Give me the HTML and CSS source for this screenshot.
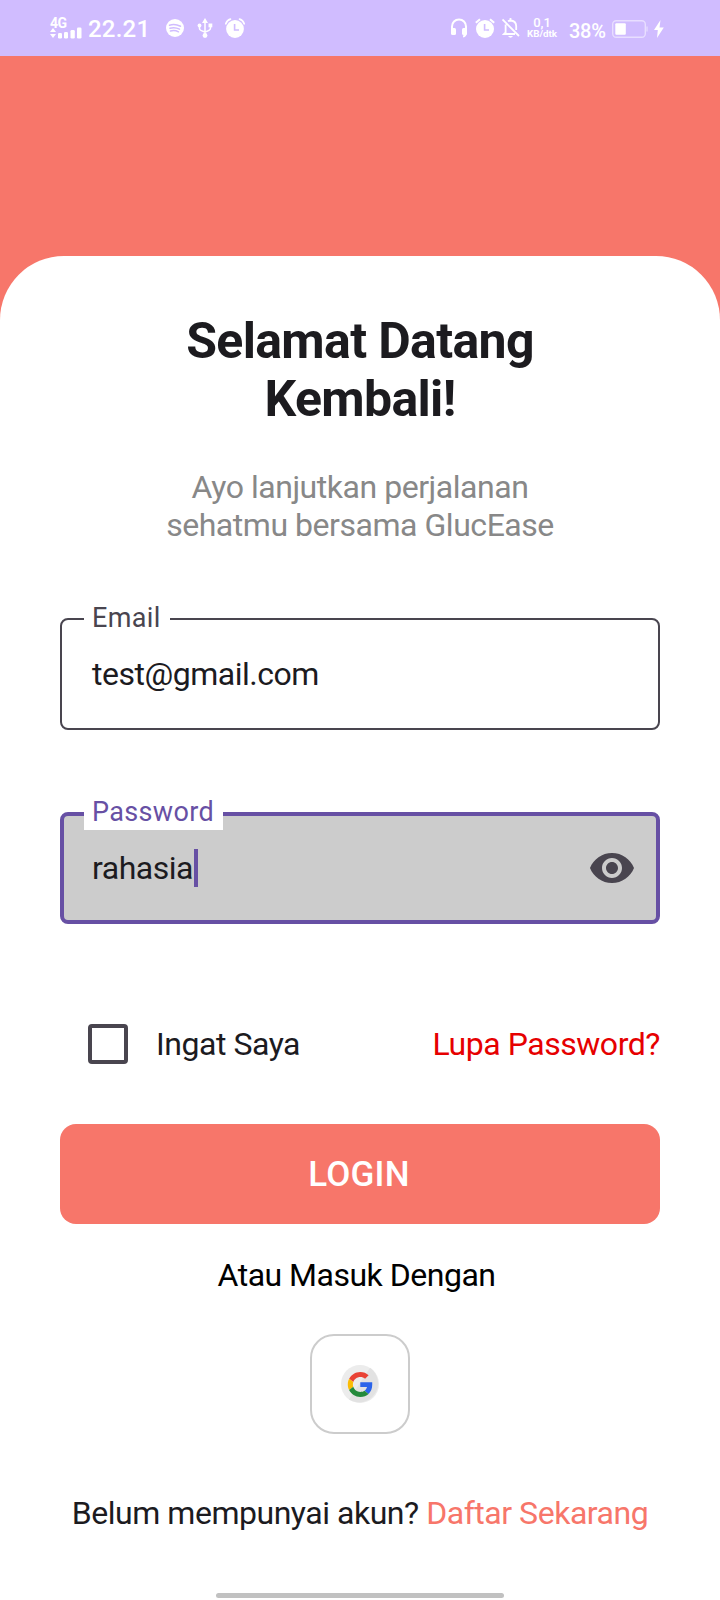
FILE: index.html
```html
<!DOCTYPE html>
<html lang="id">
<head>
<meta charset="utf-8">
<title>GlucEase</title>
<link rel="stylesheet" href="styles.css">
</head>
<body>
<div class="screen">
  <header class="status">
    <div class="network">
      <span class="network-type">4G</span>
      <svg class="signal" width="32" height="12" viewBox="0 0 32 12" fill="#fff"><path d="M0 5l3-4 3 4zM0 7h6l-3 4z"/><rect x="8" y="6" width="4" height="5.500" rx="1.3"/><rect x="14" y="5" width="4" height="6.500" rx="1.3"/><rect x="20.5" y="3" width="4.300" height="8.500" rx="1.3"/><rect x="27" y=".5" width="4.500" height="11" rx="1.3"/></svg>
    </div>
    <span class="clock">22.21</span>
    <svg class="spotify" width="18" height="18" viewBox="0 0 18 18"><circle cx="9" cy="9" r="9" fill="#fff"/><path d="M3.5 6.2q5.5-1.6 11 1M4 9.2q5-1.4 9.500 1M4.500 12q4.200-1.100 8 .8" fill="none" stroke="#d0bcff" stroke-width="1.500" stroke-linecap="round"/></svg>
    <svg class="usb" width="16" height="20" viewBox="0 0 16 20"><path d="M8 4v13M2.500 8v2.500q0 2 5.500 3.500M13.500 8v2q0 2.500-5.500 4" fill="none" stroke="#fff" stroke-width="1.500"/><path d="M8 0l3 5H5z" fill="#fff"/><circle cx="8" cy="17.500" r="2.400" fill="#fff"/><circle cx="2.500" cy="7.500" r="1.900" fill="#fff"/><path d="M11.500 5.500h3.800v3.800h-3.800z" fill="#fff"/></svg>
    <svg class="alarm-left" width="20" height="20" viewBox="0 0 20 20"><circle cx="10" cy="11" r="8.900" fill="#fff"/><path d="M.8 5.800Q1.800 2.200 5.400 1.100M19.200 5.800Q18.200 2.200 14.600 1.100" stroke="#fff" stroke-width="1.700" fill="none" stroke-linecap="round"/><path d="M9.600 6v6h4.400" stroke="#d0bcff" stroke-width="1.600" fill="none"/></svg>
    <svg class="headset" width="18" height="20" viewBox="0 0 18 20"><path d="M2 13V8.500C2 4.500 5 1.500 9 1.500s7 3 7 7V14q0 4-3 4.500" fill="none" stroke="#fff" stroke-width="2"/><rect x="1" y="10" width="5" height="7" rx="1.500" fill="#fff"/><rect x="12" y="10" width="5" height="7" rx="1.500" fill="#fff"/></svg>
    <svg class="alarm-right" width="20" height="20" viewBox="0 0 20 20"><circle cx="10" cy="11" r="9" fill="#fff"/><path d="M.8 4.800L5 1.200M19.200 4.800L15 1.200" stroke="#fff" stroke-width="2" fill="none"/><path d="M9.600 6v6h4.400" stroke="#d0bcff" stroke-width="1.600" fill="none"/></svg>
    <svg class="bell" width="18" height="20" viewBox="0 0 18 20" fill="none" stroke="#fff" stroke-width="1.800"><path d="M.5 1.500l16.500 16.500M3.600 6.500V14.500L2 16h11M6 3.200Q7 2.600 8.500 2.500q5.500.3 5.700 5.500v4"/><path d="M6 18h5q-2.500 3.500-5 0z" fill="#fff" stroke="none"/><path d="M8.500 0v3"/></svg>
    <div class="speed"><span class="rate">0,1</span><span class="unit">KB/dtk</span></div>
    <span class="percent">38%</span>
    <svg class="battery" width="36" height="18" viewBox="0 0 36 18"><rect x=".7" y=".7" width="32.600" height="16.600" rx="3.500" fill="none" stroke="#fff" stroke-opacity=".5" stroke-width="1.400"/><rect x="3.300" y="3.300" width="10.500" height="11.400" rx="1" fill="#fff"/><path d="M35 6.500v5" stroke="#fff" stroke-opacity=".5" stroke-width="1.200"/></svg>
    <svg class="bolt" width="10" height="18" viewBox="0 0 10 18"><path d="M6.500 0L0 10h3.800L3 18l6.800-10.500H5.500z" fill="#fff"/></svg>
  </header>

  <main class="card">
    <h1 class="title">Selamat Datang<br>Kembali!</h1>
    <p class="subtitle">Ayo lanjutkan perjalanan<br>sehatmu bersama GlucEase</p>

    <div class="field field-email">
      <span class="field-label">Email</span>
      <span class="field-value">test@gmail.com</span>
    </div>

    <div class="field field-password">
      <span class="field-label">Password</span>
      <span class="field-value">rahasia</span><span class="caret"></span>
      <svg class="eye" width="48" height="48" viewBox="0 0 24 24" fill="#49454f"><path d="M12 4.500C7 4.500 2.730 7.610 1 12c1.730 4.390 6 7.500 11 7.500s9.270-3.110 11-7.500c-1.730-4.390-6-7.500-11-7.500zM12 17c-2.760 0-5-2.240-5-5s2.240-5 5-5 5 2.240 5 5-2.240 5-5 5zm0-8c-1.660 0-3 1.340-3 3s1.340 3 3 3 3-1.340 3-3-1.340-3-3-3z"/></svg>
    </div>

    <div class="options">
      <span class="checkbox"></span>
      <span class="remember">Ingat Saya</span>
      <a class="forgot">Lupa Password?</a>
    </div>

    <div class="login">LOGIN</div>
    <p class="divider">Atau Masuk Dengan</p>

    <div class="google">
      <svg width="38" height="38" viewBox="0 0 38 38"><circle cx="19" cy="19" r="19" fill="#ececec"/><path d="M29 2.850A19 19 0 0 1 8 34.500z" fill="#e2e2e2"/>
      <g transform="translate(6.800 7) scale(.52)"><path fill="#e94235" d="M24 9.500c3.540 0 6.710 1.220 9.210 3.600l6.850-6.850C35.900 2.380 30.470 0 24 0 14.620 0 6.510 5.380 2.560 13.220l7.980 6.190C12.430 13.720 17.740 9.500 24 9.500z"/><path fill="#2b64ea" d="M46.980 19.800H24v9.200h12.940c-.58 2.960-2.260 5.480-4.780 7.180l7.730 6c4.510-4.180 7.090-10.360 7.090-17.650z"/><path fill="#fbbc05" d="M10.530 28.590c-.48-1.450-.76-2.990-.76-4.590s.27-3.140.76-4.590l-7.980-6.190C.92 16.460 0 20.120 0 24c0 3.880.92 7.540 2.560 10.780z"/><path fill="#248a3b" d="M24 48c6.480 0 11.930-2.130 15.890-5.810l-7.730-6c-2.150 1.450-4.920 2.300-8.160 2.300-6.260 0-11.570-4.220-13.470-9.910l-7.980 6.190C6.510 42.620 14.620 48 24 48z"/></g></svg>
    </div>

    <p class="signup">Belum mempunyai akun? <a class="signup-link">Daftar Sekarang</a></p>
    <div class="home-bar"></div>
  </main>
</div>
</body>
</html>
```
FILE: styles.css
```css
* { box-sizing: border-box; }
body { margin: 0; font-family: Roboto, "Liberation Sans", sans-serif; color: #1c1b1f; }
h1, p { margin: 0; }
svg { display: block; flex: none; }

.screen { width: 720px; height: 1600px; background: #f7766a; overflow: hidden; }

.status {
  height: 56px;
  padding: 18px 0 0 50px;
  display: flex;
  align-items: flex-start;
  background: #d0bcff;
  color: #fff;
  white-space: nowrap;
}
.network { width: 32px; height: 20px; display: flex; flex-direction: column; flex: none; }
.network-type { font-size: 14px; line-height: 10px; font-weight: 700; height: 9px; letter-spacing: -.6px; }
.clock { width: 64px; margin-left: 6px; font-size: 24px; line-height: 22px; font-weight: 500; letter-spacing: .2px; }
.spotify { margin: 1px 0 0 14px; }
.usb { margin-left: 13px; }
.alarm-left { margin-left: 12px; }
.headset { margin-left: 205px; }
.alarm-right { margin-left: 7px; }
.bell { margin-left: 7px; }
.speed { width: 32px; margin: 0 0 0 6px; display: flex; flex-direction: column; align-items: center; font-weight: 700; }
.rate { font-size: 13px; line-height: 10px; font-weight: 500; }
.unit { font-size: 9.800px; line-height: 11px; }
.percent { width: 43px; margin: 2px 0 0 11px; font-size: 20px; line-height: 23px; font-weight: 500; letter-spacing: -.3px; }
.battery { margin: 2px 0 0; }
.bolt { margin: 2px 0 0 6px; }

.card {
  height: 1344px;
  margin-top: 200px;
  padding: 56px 60px 0;
  background: #fff;
  border-radius: 64px 64px 0 0;
  display: flex;
  flex-direction: column;
}
.title { font-size: 50px; line-height: 58px; font-weight: 700; text-align: center; letter-spacing: -.650px; }
.subtitle { margin-top: 40px; font-size: 32px; line-height: 38px; text-align: center; color: #888; letter-spacing: -.460px; }

.field {
  position: relative;
  height: 112px;
  display: flex;
  align-items: center;
  border: 2px solid #49454f;
  border-radius: 8px;
  font-size: 32px;
  line-height: 38px;
  letter-spacing: -.480px;
}
.field-email { margin-top: 74px; padding-left: 30px; }
.field-password { margin-top: 82px; padding: 0 20px 0 28px; border: 4px solid #6750a4; background: #ccc; }
.field-label {
  position: absolute;
  left: 22px;
  top: -19px;
  height: 35px;
  padding: 0 9px 0 8px;
  background: #fff;
  color: #49454f;
  font-size: 27px;
  line-height: 34px;
  letter-spacing: .350px;
}
.field-password .field-label { left: 20px; top: -21px; color: #6750a4; }
.caret { width: 4px; height: 38px; margin-left: 1px; background: #6750a4; }
.eye { margin-left: auto; }

.options { height: 40px; margin-top: 100px; padding-left: 28px; display: flex; align-items: center; font-size: 32px; line-height: 38px; letter-spacing: -.460px; }
.checkbox { width: 40px; height: 40px; border: 4px solid #49454f; border-radius: 4px; }
.remember { margin-left: 28px; }
.forgot { margin-left: auto; color: #e60000; }
.login {
  height: 100px;
  margin-top: 60px;
  padding-right: 2px;
  border-radius: 16px;
  background: #f7766a;
  color: #fff;
  font-size: 35px;
  line-height: 101px;
  font-weight: 500;
  letter-spacing: .2px;
  text-align: center;
}
.divider { margin-top: 32px; padding-right: 7px; font-size: 32px; line-height: 38px; letter-spacing: -.500px; text-align: center; color: #000; }
.google {
  width: 100px;
  height: 100px;
  margin: 40px auto 0;
  border: 2px solid #ccc;
  border-radius: 24px;
  display: flex;
  align-items: center;
  justify-content: center;
}
.signup { margin: 60px -20px 0; font-size: 32px; line-height: 38px; letter-spacing: -.470px; text-align: center; white-space: nowrap; }
.signup-link { color: #f7766a; }
.home-bar { width: 288px; height: 5px; margin: 61px auto 0; border-radius: 3px; background: #c1c1c1; }
```
